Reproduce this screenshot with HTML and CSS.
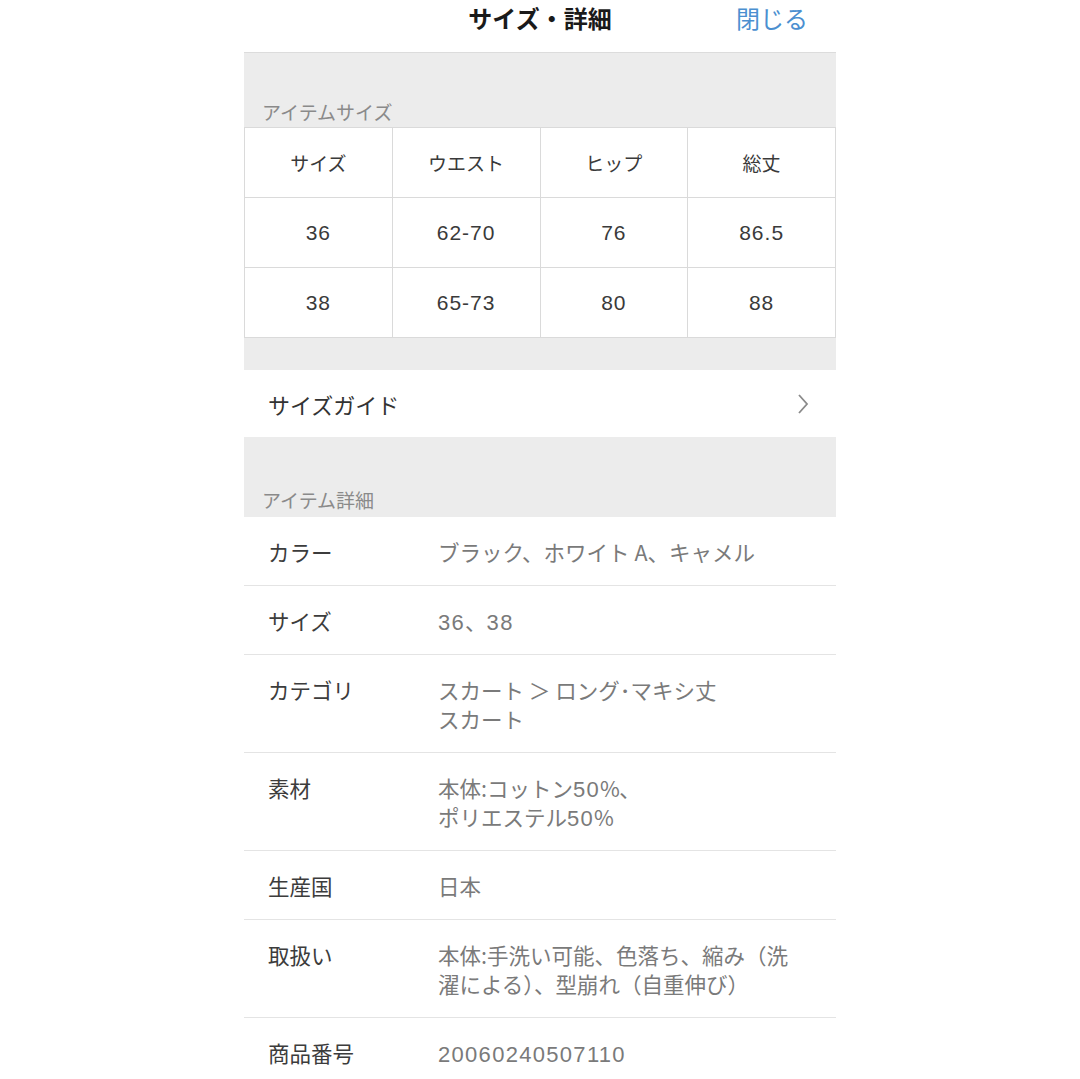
FILE: index.html
```html
<!DOCTYPE html>
<html lang="ja">
<head>
    <meta charset="UTF-8">
    <meta name="viewport" content="width=device-width, initial-scale=1.0">
    <title>サイズ・詳細</title>
    <link rel="stylesheet" href="styles.css">
</head>
<body>

<div class="screen">

    <!-- Navigation bar -->
    <div class="nav-bar">
        <span></span>
        <h1 class="nav-title">サイズ・詳細</h1>
        <a class="nav-close" href="#">閉じる</a>
    </div>

    <!-- Item size -->
    <div class="section-head">アイテムサイズ</div>
    <table class="size-table">
        <tr>
            <td>サイズ</td>
            <td>ウエスト</td>
            <td>ヒップ</td>
            <td>総丈</td>
        </tr>
        <tr class="num-row">
            <td>36</td>
            <td>62-70</td>
            <td>76</td>
            <td>86.5</td>
        </tr>
        <tr class="num-row">
            <td>38</td>
            <td>65-73</td>
            <td>80</td>
            <td>88</td>
        </tr>
    </table>
    <div class="spacer"></div>

    <a class="guide-row" href="#">
        <span>サイズガイド</span>
        <svg class="chevron" width="12" height="22" viewBox="0 0 12 22">
            <path d="M2 2 L10 11 L2 20" fill="none" stroke="#8a8a8a" stroke-width="1.8"/>
        </svg>
    </a>

    <!-- Item details -->
    <div class="section-head tall">アイテム詳細</div>
    <div class="detail-list">
        <div class="detail-row">
            <div class="detail-label">カラー</div>
            <div class="detail-value">ブラック、ホワイト A、キャメル</div>
        </div>
        <div class="detail-row">
            <div class="detail-label">サイズ</div>
            <div class="detail-value"><span class="num">36</span>、<span class="num">38</span></div>
        </div>
        <div class="detail-row">
            <div class="detail-label">カテゴリ</div>
            <div class="detail-value">スカート ＞ ロング･マキシ丈<br>スカート</div>
        </div>
        <div class="detail-row">
            <div class="detail-label">素材</div>
            <div class="detail-value">本体:コットン<span class="num">50</span>%､<br>ポリエステル<span class="num">50</span>%</div>
        </div>
        <div class="detail-row">
            <div class="detail-label">生産国</div>
            <div class="detail-value">日本</div>
        </div>
        <div class="detail-row">
            <div class="detail-label">取扱い</div>
            <div class="detail-value">本体:手洗い可能、色落ち、縮み（洗<br>濯による）、型崩れ（自重伸び）</div>
        </div>
        <div class="detail-row">
            <div class="detail-label">商品番号</div>
            <div class="detail-value"><span class="num">20060240507110</span></div>
        </div>
    </div>

</div>

</body>
</html>
```

FILE: styles.css
```css
body {
    margin: 0;
    padding: 0;
    background-color: #ffffff;
    font-family: "Noto Sans CJK JP", "Noto Sans", sans-serif;
    color: #333;
}

.screen {
    width: 592px;
    margin: 0 auto;
}

/* Navigation bar */
.nav-bar {
    height: 53px;
    display: grid;
    grid-template-columns: 1fr auto 1fr;
    align-items: center;
    border-bottom: 1px solid #dcdcdc;
    box-sizing: border-box;
    padding-bottom: 18px;
}

.nav-title {
    margin: 0;
    font-size: 24px;
    font-weight: bold;
    color: #1a1a1a;
}

.nav-close {
    justify-self: end;
    margin-right: 28px;
    font-size: 24px;
    color: #4b8fd0;
    text-decoration: none;
}

/* Section heads */
.section-head {
    height: 74px;
    background-color: #ececec;
    display: flex;
    align-items: flex-end;
    padding: 0 0 2px 18px;
    box-sizing: border-box;
    font-size: 19px;
    color: #8a8a8a;
}

.section-head.tall {
    height: 80px;
    padding-bottom: 4px;
}

/* Size table */
.size-table {
    width: 100%;
    border-collapse: collapse;
    background-color: #fff;
    table-layout: fixed;
}

.size-table td {
    height: 69px;
    border: 1px solid #dadada;
    text-align: center;
    font-size: 19px;
    color: #3a3a3a;
    padding: 0;
}

.size-table .num-row td {
    font-family: "Liberation Sans", "Noto Sans CJK JP", sans-serif;
    font-size: 21px;
    letter-spacing: 1px;
}

.spacer {
    height: 32px;
    background-color: #ececec;
}

/* Size guide */
.guide-row {
    height: 67px;
    display: flex;
    align-items: center;
    justify-content: space-between;
    padding: 0 27px 0 24px;
    font-size: 22px;
    color: #333;
    text-decoration: none;
}

/* Detail list */
.detail-row {
    display: flex;
    padding: 20px 24px 19px;
    border-bottom: 1px solid #e4e4e4;
    line-height: 29px;
    font-size: 21.5px;
}

.detail-row:last-child {
    border-bottom: none;
}

.detail-label {
    width: 170px;
    flex-shrink: 0;
    color: #3c3c3c;
}

.detail-value {
    color: #7a7a7a;
}

.detail-value .num {
    font-family: "Liberation Sans", "Noto Sans CJK JP", sans-serif;
    font-size: 22px;
    line-height: 1;
    letter-spacing: 1.3px;
}
```
